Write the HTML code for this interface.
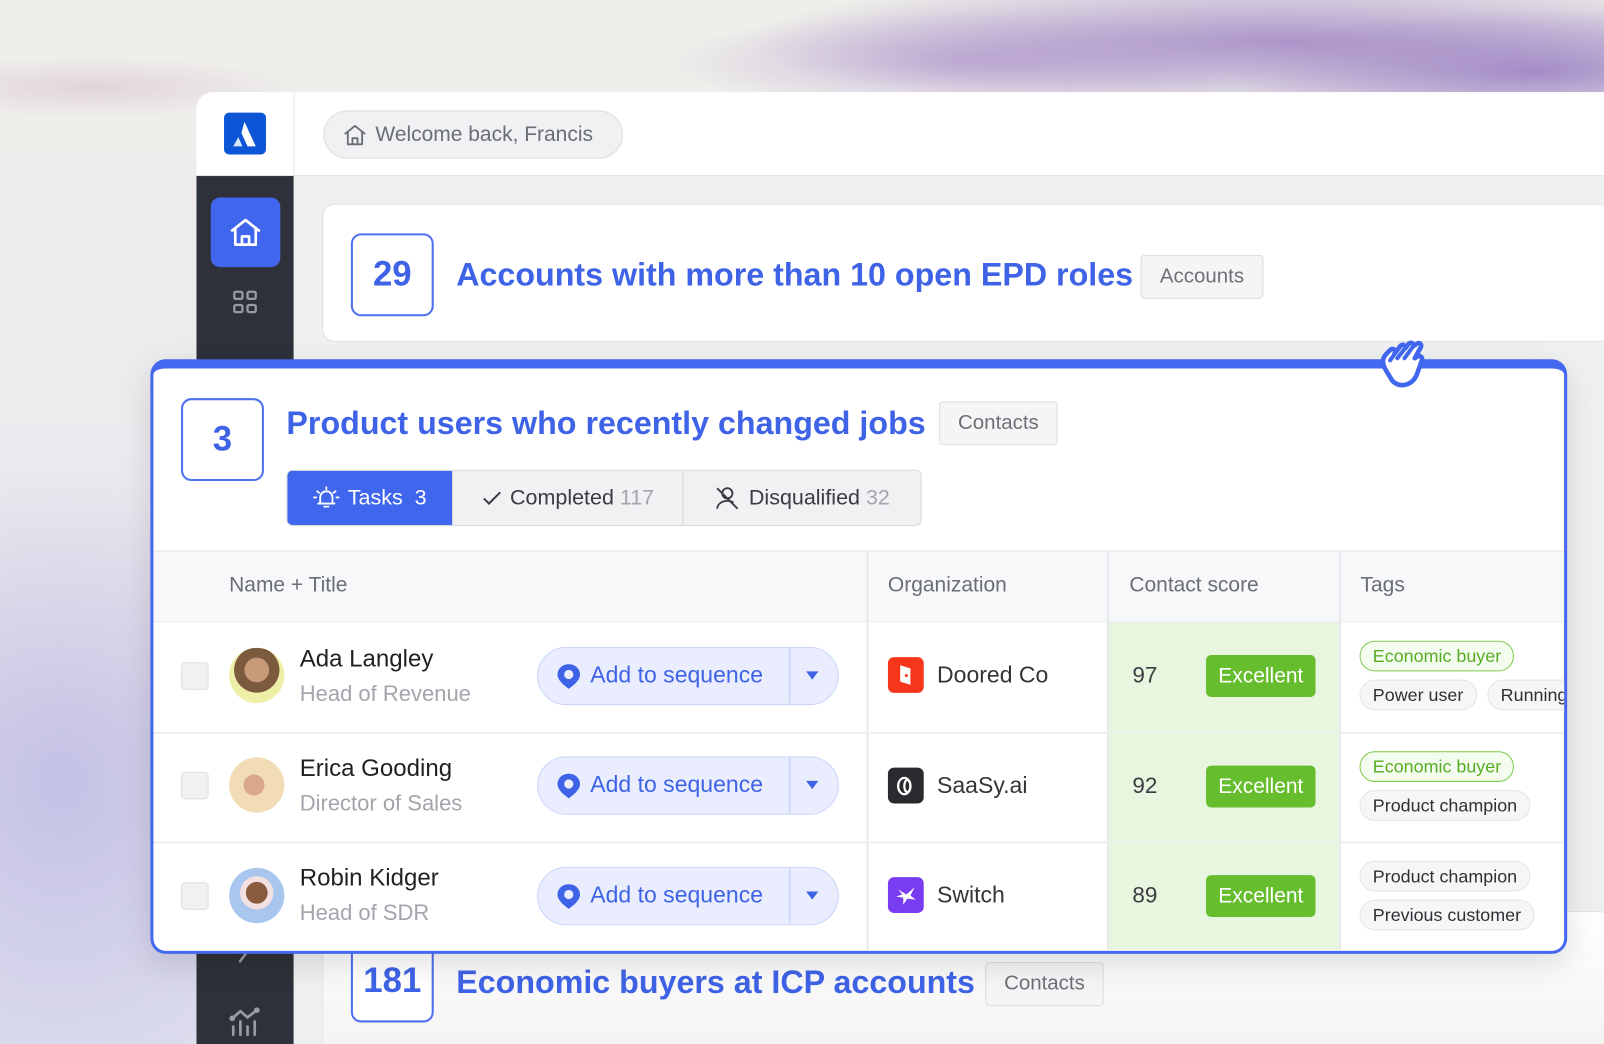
<!DOCTYPE html>
<html><head><meta charset="utf-8"><style>
*{box-sizing:border-box;margin:0;padding:0}
html,body{width:1604px;height:1044px;overflow:hidden;background:#eeeef0}
body{font-family:"Liberation Sans",sans-serif}
#w{position:absolute;left:0;top:0;width:1568px;height:1020px;transform:scale(1.02296,1.0235);transform-origin:0 0;overflow:hidden;
background:
radial-gradient(ellipse 520px 70px at 1250px 40px,rgba(150,120,190,.75),transparent),
radial-gradient(ellipse 300px 60px at 1500px 70px,rgba(140,110,190,.7),transparent),
radial-gradient(ellipse 300px 50px at 950px 60px,rgba(170,140,200,.55),transparent),
radial-gradient(ellipse 260px 300px at 60px 760px,rgba(160,160,225,.45),transparent),
radial-gradient(ellipse 200px 30px at 90px 85px,rgba(210,180,200,.45),transparent),
linear-gradient(180deg,#efefea 0%,#ecebee 40%,#e2dde9 70%,#dcdced 100%)}
.abs{position:absolute}
.frame{left:192px;top:90px;width:1376px;height:930px;background:#eef0f2;border-radius:16px 0 0 0;overflow:hidden}
.hdr{left:0;top:0;width:1376px;height:82px;background:#fff;border-bottom:1px solid #e4e5e8}
.side{left:0;top:82px;width:95px;height:848px;background:#2e3139}
.vline{left:95px;top:0;width:1px;height:82px;background:#e6e7ea}
.num{border:2px solid #4d6ff0;border-radius:10px;width:81px;height:81px;display:flex;align-items:center;justify-content:center;font-size:34px;font-weight:bold;color:#3f63e6;background:#fff}
.ttl{font-size:31.5px;font-weight:600;color:#3f63e6;white-space:nowrap}
.chip{border:1.5px solid #dcdde0;background:#f5f5f6;border-radius:4px;font-size:20px;color:#6e7079;display:flex;align-items:center;justify-content:center}
.card{background:#fff;border:1.5px solid #e0e1e4;border-radius:12px}
.main{left:147px;top:351px;width:1385px;height:581px;background:#fff;border:3px solid #4468f0;border-top:9px solid #4468f0;border-radius:15px;overflow:hidden;box-shadow:0 10px 30px rgba(0,0,0,.12)}
.tabs{left:130px;top:99px;height:55px;display:flex;border:1.5px solid #d8d9dc;border-radius:6px;overflow:hidden;background:#f0f1f3}
.tab{display:flex;align-items:center;justify-content:center;font-size:21px;color:#3a3c42;gap:8px}
.th{top:178px;left:0;width:1379px;height:70px;background:#f7f8fa;border-top:1.5px solid #e6e7ea;border-bottom:1.5px solid #eceef0}
.thc{top:200px;font-size:20.5px;color:#6b6e76}
.col{width:1.5px;background:#e8e9ec}
.row{left:0;width:1379px;height:1.5px;background:#eceef0}
.cb{width:27px;height:27px;border:1.5px solid #dedfe2;background:#f0f1f3;border-radius:4px}
.av{width:54px;height:54px;border-radius:50%;overflow:hidden}
.nm{font-size:23.5px;font-weight:500;color:#1f2024}
.tt{font-size:21.5px;color:#a3a5ac}
.seq{width:295px;height:57px;border:1.5px solid #cbd5fb;background:#e9edfd;border-radius:29px}
.seq .t{position:absolute;left:51px;top:14px;font-size:22.5px;color:#3f63e6}
.seq .d{position:absolute;left:245px;top:0;width:1.5px;height:54px;background:#cfd8fb}
.seq .c{position:absolute;left:262px;top:23px;border-left:6px solid transparent;border-right:6px solid transparent;border-top:8px solid #3f63e6}
.org{font-size:22.5px;color:#333438}
.logo{width:35px;height:35px;border-radius:6px}
.score{font-size:22px;color:#3a3c42}
.ex{width:107px;height:41px;background:#66bd2e;border-radius:5px;color:#fff;font-size:20.5px;font-weight:500;display:flex;align-items:center;justify-content:center}
.tag{height:30px;border-radius:15px;border:1.5px solid #e3e4e7;background:#f6f6f7;font-size:17.5px;color:#2f3035;padding:0 12px;display:flex;align-items:center;white-space:nowrap}
.tag.g{border-color:#7ccc4b;color:#58ad23;background:#f4fbef}
</style></head><body><div id="w">

<div class="abs frame">
  <div class="abs hdr"></div>
  <div class="abs vline"></div>
  <div class="abs side"></div>
  <div class="abs" style="left:27px;top:20px;width:41px;height:41px;background:#0b55d6;border-radius:5px">
    <svg width="41" height="41" viewBox="0 0 41 41"><path d="M20 9 L31 33 L23 33 L17 20 Z" fill="#fff"/><path d="M14 24 L18 33 L9 33 Z" fill="#dbe6fb"/></svg>
  </div>
  <div class="abs" style="left:124px;top:18px;width:293px;height:47px;border:1.5px solid #dcdde0;background:#f0f1f3;border-radius:24px;display:flex;align-items:center;padding-left:18px;font-size:20.5px;color:#6b6e76;gap:8px">
    <svg width="24" height="22" viewBox="0 0 24 22" fill="none" stroke="#6b6e76" stroke-width="1.8" stroke-linejoin="round"><path d="M2 10 L12 2 L22 10"/><path d="M5 8 V20 H19 V8"/><path d="M9.5 20 V14 H14.5 V20"/></svg>
    <span>Welcome back, Francis</span>
  </div>
  <div class="abs" style="left:14px;top:103px;width:68px;height:68px;background:#4066ee;border-radius:9px;display:flex;align-items:center;justify-content:center">
    <svg width="32" height="30" viewBox="0 0 32 30" fill="none" stroke="#fff" stroke-width="2.6" stroke-linejoin="round"><path d="M2 14 L16 3 L30 14"/><path d="M6 11 V27 H26 V11"/><path d="M12.5 27 V19 H19.5 V27"/></svg>
  </div>
  <svg class="abs" style="left:35px;top:193px" width="26" height="26" viewBox="0 0 26 26" fill="none" stroke="#9a9ca3" stroke-width="2.2"><rect x="2" y="2" width="8" height="7" rx="1.5"/><rect x="15" y="2" width="8" height="7" rx="1.5"/><rect x="2" y="15" width="8" height="7" rx="1.5"/><rect x="15" y="15" width="8" height="7" rx="1.5"/></svg>
  <svg class="abs" style="left:38px;top:830px" width="22" height="24" viewBox="0 0 22 24" fill="none" stroke="#9a9ca3" stroke-width="2.4"><path d="M18 2 L4 20"/></svg>
  <svg class="abs" style="left:32px;top:893px" width="34" height="30" viewBox="0 0 34 30" fill="none" stroke="#9a9ca3" stroke-width="2.6" stroke-linecap="round"><path d="M3 12 L11 5 L18 11 L27 4"/><circle cx="3" cy="12" r="1.5"/><circle cx="27" cy="4" r="1.5"/><path d="M4 20 V28 M11 15 V28 M18 20 V28 M25 15 V28"/></svg>

  <div class="abs card" style="left:123px;top:109px;width:1260px;height:135px"></div>
  <div class="abs num" style="left:151px;top:138px">29</div>
  <div class="abs ttl" style="left:254px;top:160px">Accounts with more than 10 open EPD roles</div>
  <div class="abs chip" style="left:923px;top:159px;width:120px;height:43px">Accounts</div>

  <div class="abs card" style="left:123px;top:800px;width:1260px;height:130px;background:linear-gradient(#fff,#f4f4f5);border-bottom:none;border-radius:12px 12px 0 0"></div>
  <div class="abs num" style="left:151px;top:828px">181</div>
  <div class="abs ttl" style="left:254px;top:851px">Economic buyers at ICP accounts</div>
  <div class="abs chip" style="left:771px;top:850px;width:116px;height:43px">Contacts</div>
</div>

<div class="abs main">
  <div class="abs num" style="left:27px;top:29px">3</div>
  <div class="abs ttl" style="left:130px;top:35px">Product users who recently changed jobs</div>
  <div class="abs chip" style="left:768px;top:32px;width:116px;height:43px">Contacts</div>
  <div class="abs tabs">
    <div class="tab" style="width:161px;background:#4066ee;color:#fff">
      <svg width="26" height="24" viewBox="0 0 26 24" fill="none" stroke="#fff" stroke-width="1.8" stroke-linecap="round"><path d="M7 17 V11 a6 6 0 0 1 12 0 V17 Z M5 17 H21"/><path d="M11 20 H15"/><path d="M13 1 V3 M4 5 L6 6.5 M22 5 L20 6.5 M1 11 H3 M23 11 H25"/></svg>
      <span>Tasks&nbsp; 3</span></div>
    <div class="tab" style="width:225px;border-left:1.5px solid #d8d9dc">
      <svg width="20" height="16" viewBox="0 0 20 16" fill="none" stroke="#3a3c42" stroke-width="2"><path d="M2 8 L7 13 L18 2"/></svg>
      <span>Completed <span style="color:#a3a5ac">117</span></span></div>
    <div class="tab" style="width:233px;border-left:1.5px solid #d8d9dc">
      <svg width="26" height="24" viewBox="0 0 26 24" fill="none" stroke="#3a3c42" stroke-width="1.8"><circle cx="13" cy="7" r="5"/><path d="M3 22 a10 8 0 0 1 16 -6"/><path d="M3 2 L23 22"/></svg>
      <span>Disqualified <span style="color:#a3a5ac">32</span></span></div>
  </div>

  <div class="abs th"></div>
  <div class="abs thc" style="left:74px">Name + Title</div>
  <div class="abs thc" style="left:718px">Organization</div>
  <div class="abs thc" style="left:954px">Contact score</div>
  <div class="abs thc" style="left:1180px">Tags</div>
  <div class="abs" style="left:932px;top:248px;width:227px;height:320px;background:#e8f5df"></div>
  <div class="abs col" style="left:697px;top:178px;height:390px"></div>
  <div class="abs col" style="left:932px;top:178px;height:390px"></div>
  <div class="abs col" style="left:1159px;top:178px;height:390px"></div>
  <div class="abs row" style="top:355px"></div>
  <div class="abs row" style="top:462px"></div>

  <div class="abs cb" style="left:27px;top:287px"></div>
  <div class="abs av" style="left:74px;top:273px;background:radial-gradient(circle at 50% 40%,#c99a7a 0 28%,#7b5a3e 29% 52%,#eef0a8 53%)"></div>
  <div class="abs nm" style="left:143px;top:270px">Ada Langley</div>
  <div class="abs tt" style="left:143px;top:306px">Head of Revenue</div>
  <div class="abs seq" style="left:375px;top:272px"><svg class="abs" style="left:18px;top:15px" width="24" height="26" viewBox="0 0 24 26"><path d="M12 1 C5 1 1 6 1 11 C1 17 8 22 12 25 C16 22 23 17 23 11 C23 6 19 1 12 1Z" fill="#3f63e6"/><circle cx="12" cy="11" r="4.5" fill="#e9edfd"/></svg><span class="t">Add to sequence</span><span class="d"></span><span class="c"></span></div>
  <div class="abs logo" style="left:718px;top:282px;background:#f6361a"><svg width="35" height="35"><path d="M12 8 L22 11 V27 L12 24Z" fill="#fff"/><circle cx="18" cy="18" r="1.5" fill="#f6361a"/></svg></div>
  <div class="abs org" style="left:766px;top:287px">Doored Co</div>
  <div class="abs score" style="left:957px;top:287px">97</div>
  <div class="abs ex" style="left:1029px;top:280px">Excellent</div>
  <div class="abs tag g" style="left:1179px;top:266px">Economic buyer</div>
  <div class="abs tag" style="left:1179px;top:304px">Power user</div>
  <div class="abs tag" style="left:1304px;top:304px">Running</div>

  <div class="abs cb" style="left:27px;top:394px"></div>
  <div class="abs av" style="left:74px;top:380px;background:radial-gradient(circle at 45% 50%,#d9a88a 0 25%,#f2dcb6 26%)"></div>
  <div class="abs nm" style="left:143px;top:377px">Erica Gooding</div>
  <div class="abs tt" style="left:143px;top:413px">Director of Sales</div>
  <div class="abs seq" style="left:375px;top:379px"><svg class="abs" style="left:18px;top:15px" width="24" height="26" viewBox="0 0 24 26"><path d="M12 1 C5 1 1 6 1 11 C1 17 8 22 12 25 C16 22 23 17 23 11 C23 6 19 1 12 1Z" fill="#3f63e6"/><circle cx="12" cy="11" r="4.5" fill="#e9edfd"/></svg><span class="t">Add to sequence</span><span class="d"></span><span class="c"></span></div>
  <div class="abs logo" style="left:718px;top:390px;background:#2a2b2e"><svg width="35" height="35" fill="none" stroke="#fff" stroke-width="2.2"><ellipse cx="16" cy="18" rx="6" ry="8"/><ellipse cx="19" cy="18" rx="3" ry="6"/></svg></div>
  <div class="abs org" style="left:766px;top:395px">SaaSy.ai</div>
  <div class="abs score" style="left:957px;top:395px">92</div>
  <div class="abs ex" style="left:1029px;top:388px">Excellent</div>
  <div class="abs tag g" style="left:1179px;top:374px">Economic buyer</div>
  <div class="abs tag" style="left:1179px;top:412px">Product champion</div>

  <div class="abs cb" style="left:27px;top:502px"></div>
  <div class="abs av" style="left:74px;top:488px;background:radial-gradient(circle at 50% 45%,#8a5a3e 0 26%,#f3e0e0 27% 40%,#a9c6ee 41%)"></div>
  <div class="abs nm" style="left:143px;top:484px">Robin Kidger</div>
  <div class="abs tt" style="left:143px;top:520px">Head of SDR</div>
  <div class="abs seq" style="left:375px;top:487px"><svg class="abs" style="left:18px;top:15px" width="24" height="26" viewBox="0 0 24 26"><path d="M12 1 C5 1 1 6 1 11 C1 17 8 22 12 25 C16 22 23 17 23 11 C23 6 19 1 12 1Z" fill="#3f63e6"/><circle cx="12" cy="11" r="4.5" fill="#e9edfd"/></svg><span class="t">Add to sequence</span><span class="d"></span><span class="c"></span></div>
  <div class="abs logo" style="left:718px;top:497px;background:#7a3cf0"><svg width="35" height="35" fill="#fff"><path d="M10 12 L18 17 L26 10 L22 18 L27 22 L19 21 L15 27 L15 20 L8 19 L14 17Z"/></svg></div>
  <div class="abs org" style="left:766px;top:502px">Switch</div>
  <div class="abs score" style="left:957px;top:502px">89</div>
  <div class="abs ex" style="left:1029px;top:495px">Excellent</div>
  <div class="abs tag" style="left:1179px;top:481px">Product champion</div>
  <div class="abs tag" style="left:1179px;top:519px">Previous customer</div>
</div>

<svg class="abs" style="left:1345px;top:328px" width="56" height="58" viewBox="0 0 56 58">
  <path d="M10 34 C6 28 6 22 10 18 L14 14 C16 12 19 13 19 16 L18 18 L24 10 C26 8 29 9 29 12 L32 8 C34 6 37 7 37 10 L40 8 C42 6 45 8 44 11 L38 22 L41 20 C43 19 46 21 45 24 L40 38 C36 48 24 52 16 44 Z" fill="#fff" stroke="#4066ee" stroke-width="4.5" stroke-linejoin="round"/>
  <path d="M19 17 L14 24 M28 13 L21 22 M36 11 L28 22" stroke="#4066ee" stroke-width="4" stroke-linecap="round"/>
</svg>
</div></body></html>
